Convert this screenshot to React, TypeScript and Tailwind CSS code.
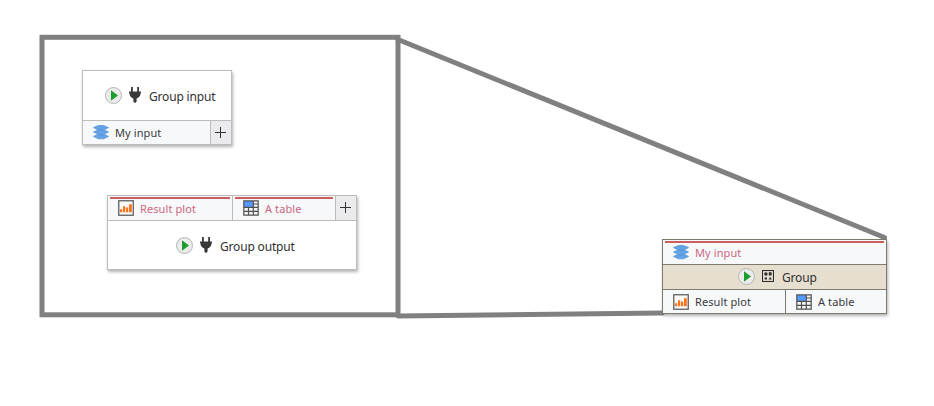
import type { ReactNode } from "react";

function PlayIcon() {
  return (
    <svg width="17" height="17" viewBox="0 0 17 17" className="shrink-0">
      <circle cx="8.5" cy="8.5" r="8" fill="#ebebeb" stroke="#b5b5b5" />
      <path d="M6 3.2L13 8.5L6 13.8Z" fill="#1b9e2d" />
    </svg>
  );
}

function PlugIcon() {
  return (
    <svg width="12" height="16" viewBox="0 0 12 16" className="mb-px shrink-0" fill="#383838">
      <path d="M2 0H3.8V4.5H2ZM8.2 0H10V4.5H8.2ZM0 4.5H12V6.2H11.4V7.8C11 9.6 9.3 11 7.6 11.6V14.5L6.6 15.8H5.4L4.4 14.5V11.6C2.7 11 1 9.6 .6 7.8V6.2H0Z" />
    </svg>
  );
}

function LayersIcon() {
  return (
    <svg width="16" height="15" viewBox="0 0 16 15" className="shrink-0" fill="#64a4e6" stroke="#4b8fd4" strokeWidth=".7">
      <path d="M.5 11.4L4 9.8H12L15.5 11.4L10.5 13.8H5.5Z" />
      <path d="M.5 7L4 5.4H12L15.5 7L10.5 9.6H5.5Z" />
      <path d="M.5 2.6L5.5 .5H10.5L15.5 2.6L10.5 5.2H5.5Z" />
    </svg>
  );
}

function PlotIcon() {
  return (
    <svg width="16" height="16" viewBox="0 0 16 16" className="shrink-0">
      <rect x=".75" y=".75" width="14.5" height="14.5" fill="#f8f8f8" stroke="#606060" strokeWidth="1.3" />
      <path d="M2 9.3H4.2V12.3H2ZM5 6.2H7.2V12.3H5ZM8 7.5H10.2V12.3H8ZM11 4.2H13.8V12.3H11Z" fill="#ff7418" />
    </svg>
  );
}

function TableIcon() {
  return (
    <svg width="16" height="16" viewBox="0 0 16 16" className="shrink-0">
      <rect x="1" y="1" width="14" height="14" fill="#f4f4f4" />
      <rect x="1" y="1" width="9" height="6" fill="#5599ff" />
      <path d="M.8 .8H15.2V15.2H.8ZM1 7.3H15M1 11.3H15M10.3 1V15M5.5 7.3V15M10.3 4H15" fill="none" stroke="#505050" strokeWidth="1.2" />
    </svg>
  );
}

function GroupIcon() {
  return (
    <svg width="12" height="12" viewBox="0 0 12 12" className="mb-0.5 shrink-0">
      <rect x=".5" y=".5" width="11" height="11" fill="none" stroke="#2b2b2b" strokeWidth="1.1" />
      <circle cx="3.9" cy="4" r="1.7" fill="#2b2b2b" />
      <path d="M6.8 2.3H9.6V5.5H6.8ZM2.7 7.5H5V9.6H2.7ZM8.2 6.9L9.8 9.6H6.6Z" fill="#2b2b2b" />
    </svg>
  );
}

function Port({ icon, label, size, missing = false }: { icon: ReactNode; label: string; size: string; missing?: boolean }) {
  return (
    <div className={`relative flex items-center bg-[#f6f8fa] pl-2.5 text-[11px] leading-4 ${size} ${missing ? "text-[#cb6880]" : "text-[#3a3a3a]"}`}>
      {missing && <span className="absolute top-px right-0.5 left-0.5 h-0.5 bg-[#c95d60]" />}
      <span className="flex w-[22px] items-center">{icon}</span>
      <span className={`whitespace-nowrap tracking-[0.1px] ${missing ? "pt-0.5" : ""}`}>{label}</span>
    </div>
  );
}

function AddPort({ className }: { className: string }) {
  return (
    <div className={`flex flex-1 items-center justify-center bg-[#ebebed] pr-0.5 ${className}`}>
      <svg width="11" height="11" viewBox="0 0 11 11" stroke="#333">
        <path d="M5.5 0V11M0 5.5H11" />
      </svg>
    </div>
  );
}

function Title({ icon, label, className }: { icon: ReactNode; label: string; className: string }) {
  return (
    <div className={`flex items-center text-[12px] leading-4 text-[#303030] ${className}`}>
      <PlayIcon />
      <span className="ml-[7px] flex w-5 items-center">{icon}</span>
      <span className="pt-0.5 tracking-[-0.17px] whitespace-nowrap">{label}</span>
    </div>
  );
}

export default function App() {
  return (
    <div className="relative h-[406px] w-[934px] overflow-hidden bg-white font-['Noto_Sans',sans-serif]">
      <svg width="934" height="406" className="absolute inset-0" fill="none" stroke="#808080" strokeWidth="5">
        <rect x="42" y="37.3" width="356" height="277.5" />
        <path d="M398 39.5L884.5 237.5M398 316L662.5 313" strokeLinecap="round" />
      </svg>

      <div className="absolute top-[70px] left-[82px] w-[150px] border border-[#bcbcbc] bg-[#bcbcbc] shadow-[1px_2px_3px_rgba(0,0,0,0.3)]">
        <Title icon={<PlugIcon />} label="Group input" className="h-[49px] bg-white pl-[22px]" />
        <div className="mt-px flex gap-px">
          <Port icon={<LayersIcon />} label="My input" size="h-[23px] w-[127px]" />
          <AddPort className="h-[23px]" />
        </div>
      </div>

      <div className="absolute top-[195px] left-[107px] w-[250px] border border-[#bcbcbc] bg-[#bcbcbc] shadow-[1px_2px_3px_rgba(0,0,0,0.3)]">
        <div className="flex gap-px">
          <Port icon={<PlotIcon />} label="Result plot" size="h-6 w-[124px]" missing />
          <Port icon={<TableIcon />} label="A table" size="h-6 w-[102px]" missing />
          <AddPort className="h-6 pb-px" />
        </div>
        <Title icon={<PlugIcon />} label="Group output" className="mt-px h-12 bg-white pt-px pl-[68px]" />
      </div>

      <div className="absolute top-[239px] left-[662px] w-[225px] border border-[#7d796f] bg-[#7d796f] shadow-[1px_2px_3px_rgba(0,0,0,0.3)]">
        <Port icon={<LayersIcon />} label="My input" size="h-6 w-full" missing />
        <Title icon={<GroupIcon />} label="Group" className="my-px h-6 bg-[#e6decf] pb-px pl-[75px]" />
        <div className="flex gap-px">
          <Port icon={<PlotIcon />} label="Result plot" size="h-[23px] w-[122px]" />
          <Port icon={<TableIcon />} label="A table" size="h-[23px] flex-1" />
        </div>
      </div>
    </div>
  );
}
